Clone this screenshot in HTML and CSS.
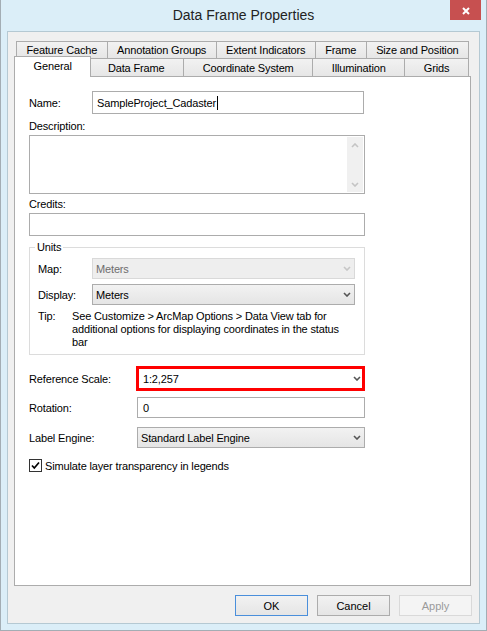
FILE: index.html
```html
<!DOCTYPE html>
<html lang="en">
<head>
    <meta charset="UTF-8">
    <meta name="viewport" content="width=device-width, initial-scale=1.0">
    <title>Data Frame Properties</title>
    <link rel="stylesheet" href="styles.css">
</head>
<body>

    <div class="window">
        <div class="titlebar">
            <div class="title">Data Frame Properties</div>
            <button class="close-btn" aria-label="Close">
                <svg width="8" height="8" viewBox="0 0 8 8"><path d="M1 1L7 7M7 1L1 7" stroke="#fff" stroke-width="2"/></svg>
            </button>
        </div>

        <div class="client">
            <!-- two rows of tabs, the front row touches the page -->
            <div class="tab-row">
                <div class="tab">Feature Cache</div>
                <div class="tab">Annotation Groups</div>
                <div class="tab">Extent Indicators</div>
                <div class="tab">Frame</div>
                <div class="tab">Size and Position</div>
            </div>
            <div class="tab-row tab-row-front">
                <div class="tab is-active">General</div>
                <div class="tab">Data Frame</div>
                <div class="tab">Coordinate System</div>
                <div class="tab">Illumination</div>
                <div class="tab">Grids</div>
            </div>

            <div class="panel">
                <div class="form">
                    <div class="field">
                        <span class="field-label">Name:</span>
                        <div class="textbox textbox-name">SampleProject_Cadaster<span class="caret"></span></div>
                    </div>

                    <div class="block-label">Description:</div>
                    <div class="memo">
                        <div class="memo-scroll">
                            <svg class="chev" width="8" height="5" viewBox="0 0 8 5"><polyline points="1,4 4,1 7,4" fill="none" stroke="#c4c4c4" stroke-width="1.6"/></svg>
                            <svg class="chev" width="8" height="5" viewBox="0 0 8 5"><polyline points="1,1 4,4 7,1" fill="none" stroke="#c4c4c4" stroke-width="1.6"/></svg>
                        </div>
                    </div>

                    <div class="block-label block-label-credits">Credits:</div>
                    <div class="textbox"></div>

                    <fieldset class="group">
                        <legend>Units</legend>
                        <div class="field">
                            <span class="group-label">Map:</span>
                            <div class="combo combo-disabled">
                                <span class="combo-text">Meters</span>
                                <span class="combo-arrow"><svg width="8" height="5" viewBox="0 0 8 5"><polyline points="1,1 4,4 7,1" fill="none" stroke="#c6c6c6" stroke-width="1.6"/></svg></span>
                            </div>
                        </div>
                        <div class="field field-display">
                            <span class="group-label">Display:</span>
                            <div class="combo">
                                <span class="combo-text">Meters</span>
                                <span class="combo-arrow"><svg width="8" height="5" viewBox="0 0 8 5"><polyline points="1,1 4,4 7,1" fill="none" stroke="#555" stroke-width="1.6"/></svg></span>
                            </div>
                        </div>
                        <div class="tip">
                            <span class="tip-label">Tip:</span>
                            <span class="tip-text">See Customize &gt; ArcMap Options &gt; Data View tab for additional options for displaying coordinates in the status bar</span>
                        </div>
                    </fieldset>

                    <div class="field field-scale">
                        <span class="wide-label">Reference Scale:</span>
                        <div class="combo combo-edit combo-marked">
                            <span class="combo-text">1:2,257</span>
                            <span class="combo-arrow"><svg width="8" height="5" viewBox="0 0 8 5"><polyline points="1,1 4,4 7,1" fill="none" stroke="#555" stroke-width="1.6"/></svg></span>
                        </div>
                    </div>

                    <div class="field field-rotation">
                        <span class="wide-label">Rotation:</span>
                        <div class="textbox textbox-short">0</div>
                    </div>

                    <div class="field field-engine">
                        <span class="wide-label">Label Engine:</span>
                        <div class="combo combo-engine">
                            <span class="combo-text">Standard Label Engine</span>
                            <span class="combo-arrow"><svg width="8" height="5" viewBox="0 0 8 5"><polyline points="1,1 4,4 7,1" fill="none" stroke="#555" stroke-width="1.6"/></svg></span>
                        </div>
                    </div>

                    <label class="check">
                        <span class="check-box"><svg width="11" height="11" viewBox="0 0 11 11"><path d="M2 5.5L4.3 8L9 2.5" fill="none" stroke="#000" stroke-width="1.7"/></svg></span>
                        Simulate layer transparency in legends
                    </label>
                </div>
            </div>

            <div class="buttons">
                <button class="btn btn-default">OK</button>
                <button class="btn">Cancel</button>
                <button class="btn" disabled>Apply</button>
            </div>
        </div>
    </div>

</body>
</html>
```

FILE: styles.css
```css
* {
    box-sizing: border-box;
}

body {
    margin: 0;
    font-family: 'Liberation Sans', Arial, sans-serif;
    font-size: 11px;
    letter-spacing: -0.15px;
    color: #000;
    background: #dbeef8;
}

.window {
    width: 487px;
    height: 631px;
    background: #dbeef8;
    border: 1px solid #a3adb4;
    border-top: 0;
    padding: 0 6px 6px;
    display: flex;
    flex-direction: column;
}

/* title bar */

.titlebar {
    height: 31px;
    flex: none;
    display: grid;
    grid-template-columns: 1fr auto 1fr;
}

.title {
    grid-column: 2;
    font-size: 14px;
    line-height: 31px;
    letter-spacing: 0;
    color: #222;
}

.close-btn {
    grid-column: 3;
    justify-self: end;
    width: 31px;
    height: 20px;
    margin-right: -1px;
    padding: 0;
    border: none;
    background: #c75050;
    display: flex;
    align-items: center;
    justify-content: center;
    padding-top: 2px;
}

.client {
    flex: 1;
    background: #f0f0f0;
    border: 1px solid #b5c9d3;
    padding: 9px 8px 7px 6px;
    display: flex;
    flex-direction: column;
}

/* tabs */

.tab-row {
    display: flex;
    margin: 0 2px;
}

.tab {
    flex: 1 1 auto;
    text-align: center;
    white-space: nowrap;
    line-height: 15px;
    padding-top: 1px;
    border: 1px solid #acacac;
    border-bottom: 0;
    background: linear-gradient(#f2f2f2, #e6e6e6);
}

.tab + .tab {
    border-left: 0;
}

.tab-row-front .tab {
    padding-top: 2px;
}

.tab.is-active {
    position: relative;
    z-index: 1;
    margin: -2px -2px -1px;
    background: #fff;
}

/* page */

.panel {
    flex: 1;
    background: #fff;
    border: 1px solid #acacac;
    padding: 14px 0 0 14px;
}

.form {
    width: 336px;
}

.field {
    display: flex;
    align-items: center;
}

.field-label {
    width: 63px;
    flex: none;
}

.textbox {
    height: 23px;
    border: 1px solid #acacac;
    background: #fff;
    padding: 0 4px;
    display: flex;
    align-items: center;
    white-space: nowrap;
}

.textbox-name {
    width: 272px;
}

.caret {
    display: inline-block;
    width: 1px;
    height: 14px;
    background: #000;
    margin-left: 1px;
}

.block-label {
    line-height: 15px;
    margin: 5px 0 1px;
}

.block-label-credits {
    margin-top: 3px;
}

.memo {
    height: 59px;
    border: 1px solid #acacac;
    background: #fff;
    padding: 1px;
    display: flex;
    justify-content: flex-end;
}

.memo-scroll {
    width: 16px;
    background: #f0f0f0;
    display: flex;
    flex-direction: column;
    justify-content: space-between;
    align-items: center;
    padding: 6px 0 5px;
}

.chev {
    display: block;
}

/* units group */

.group {
    margin: 4px 0 0;
    padding: 0 9px 5px 8px;
    border: 1px solid #dcdcdc;
    min-width: 0;
}

.group legend {
    padding: 0 2px;
    margin-left: -3px;
    line-height: 15px;
}

.group .field {
    margin-top: 3px;
}

.group .field-display {
    margin-top: 5px;
}

.group-label {
    width: 54px;
    flex: none;
}

.combo {
    width: 263px;
    height: 21px;
    border: 1px solid #acacac;
    background: linear-gradient(#f2f2f2, #e5e5e5);
    padding-left: 3px;
    display: flex;
    align-items: center;
}

.combo-text {
    flex: 1;
    white-space: nowrap;
}

.combo-arrow {
    width: 15px;
    display: flex;
    justify-content: center;
}

.combo-disabled {
    background: #eeeeee;
    border-color: #d9d9d9;
    color: #6d6d6d;
}

.tip {
    display: flex;
    margin-top: 5px;
    line-height: 13px;
}

.tip-label {
    width: 34px;
    flex: none;
}

/* scale, rotation, label engine */

.wide-label {
    width: 108px;
    flex: none;
}

.field-scale {
    margin-top: 11px;
}

.combo-edit {
    background: #fff;
}

.combo-marked {
    width: 230px;
    height: 25px;
    margin-left: -1px;
    border: 3px solid #ff0000;
    padding-left: 4px;
}

.combo-marked .combo-arrow {
    width: 11px;
}

.field-rotation {
    margin-top: 6px;
}

.textbox-short {
    width: 228px;
    height: 21px;
    padding-left: 5px;
}

.field-engine {
    margin-top: 9px;
}

.combo-engine {
    width: 228px;
}

.check {
    display: flex;
    align-items: center;
    gap: 3px;
    margin-top: 11px;
}

.check-box {
    width: 13px;
    height: 13px;
    border: 1px solid #333;
    background: #fff;
    display: flex;
    align-items: center;
    justify-content: center;
}

/* dialog buttons */

.buttons {
    display: flex;
    justify-content: flex-end;
    gap: 9px;
    margin: 9px -1px 0 0;
}

.btn {
    width: 73px;
    height: 21px;
    padding: 0;
    font: inherit;
    color: #000;
    border: 1px solid #acacac;
    background: linear-gradient(#f2f2f2, #e5e5e5);
}

.btn-default {
    border-color: #4a8fdb;
}

.btn:disabled {
    border-color: #d9d9d9;
    background: #f4f4f4;
    color: #9a9a9a;
}
```
